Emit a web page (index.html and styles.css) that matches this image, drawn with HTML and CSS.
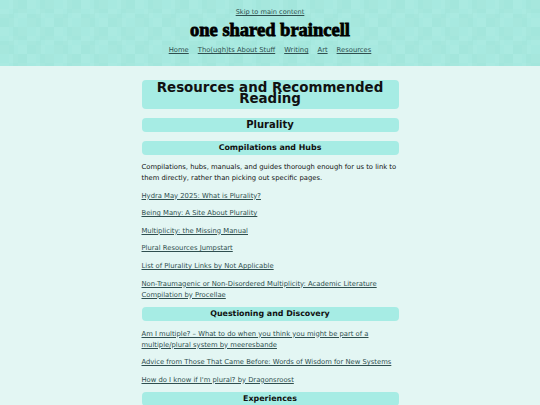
FILE: index.html
```html
<!DOCTYPE html>
<html lang="en">
<head>
<meta charset="utf-8">
<title>Resources and Recommended Reading - one shared braincell</title>
<link rel="stylesheet" href="styles.css">
</head>
<body>
<header class="site-header">
  <a class="skip" href="#main">Skip to main content</a>
  <div class="site-title">one shared braincell</div>
  <nav class="nav">
    <a href="#">Home</a>
    <a href="#">Tho(ugh)ts About Stuff</a>
    <a href="#">Writing</a>
    <a href="#">Art</a>
    <a href="#">Resources</a>
  </nav>
</header>
<main id="main" class="content">
  <h1 class="h1">Resources and Recommended Reading</h1>
  <h2 class="h2">Plurality</h2>
  <h3 class="h3">Compilations and Hubs</h3>
  <p class="text">Compilations, hubs, manuals, and guides thorough enough for us to link to them directly, rather than picking out specific pages.</p>
  <p class="item"><a href="#">Hydra May 2025: What is Plurality?</a></p>
  <p class="item"><a href="#">Being Many: A Site About Plurality</a></p>
  <p class="item"><a href="#">Multiplicity: the Missing Manual</a></p>
  <p class="item"><a href="#">Plural Resources Jumpstart</a></p>
  <p class="item"><a href="#">List of Plurality Links by Not Applicable</a></p>
  <p class="item"><a href="#">Non-Traumagenic or Non-Disordered Multiplicity: Academic Literature Compilation by Procellae</a></p>
  <h3 class="h3">Questioning and Discovery</h3>
  <p class="item"><a href="#">Am I multiple? – What to do when you think you might be part of a multiple/plural system by meeresbande</a></p>
  <p class="item"><a href="#">Advice from Those That Came Before: Words of Wisdom for New Systems</a></p>
  <p class="item"><a href="#">How do I know if I'm plural? by Dragonsroost</a></p>
  <h3 class="h3">Experiences</h3>
</main>
</body>
</html>
```
FILE: styles.css
```css
html, body {
  margin: 0;
  padding: 0;
}
body {
  background: #e3f6f3;
  font-family: "DejaVu Sans", Verdana, sans-serif;
  color: #111;
  font-size: 6.8px;
}
a {
  color: #2f4f4f;
}
.site-header {
  height: 66px;
  background-color: #a5e9df;
  background-image:
    repeating-conic-gradient(rgba(255,255,255,0.035) 0 25%, rgba(0,0,0,0) 0 50%),
    repeating-conic-gradient(rgba(0,0,0,0.012) 0 25%, rgba(255,255,255,0.02) 0 50%);
  background-size: 18px 18px, 27px 27px;
  display: flex;
  flex-direction: column;
  align-items: center;
  padding-top: 8px;
  box-sizing: border-box;
}
.skip {
  font-size: 6.6px;
  line-height: 9px;
}
.site-title {
  font-family: "Liberation Serif", "Times New Roman", serif;
  font-weight: bold;
  font-size: 18.5px;
  line-height: 22px;
  margin-top: 2px;
  color: #000;
  -webkit-text-stroke: 0.8px #000;
}
.nav {
  display: flex;
  gap: 9px;
  font-size: 6.8px;
  margin-top: 5px;
}
.content {
  width: 257px;
  margin: 14px auto 0;
}
.h1, .h2, .h3 {
  background: #a6ece4;
  border-radius: 4px;
  text-align: center;
  margin: 0;
  font-weight: bold;
}
.h1 {
  font-size: 13.4px;
  line-height: 10.5px;
  padding: 3px 0 5px;
}
.h2 {
  font-size: 10px;
  line-height: 14px;
  margin-top: 9px;
}
.h3 {
  font-size: 7.9px;
  line-height: 13.5px;
  margin-top: 9px;
}
.text, .item {
  margin: 6.6px 0 0;
  line-height: 11px;
}
.h3 + .text {
  margin-top: 7.5px;
}
.h3 + .item {
  margin-top: 8px;
}
.item + .h3 {
  margin-top: 6.5px;
}
```
